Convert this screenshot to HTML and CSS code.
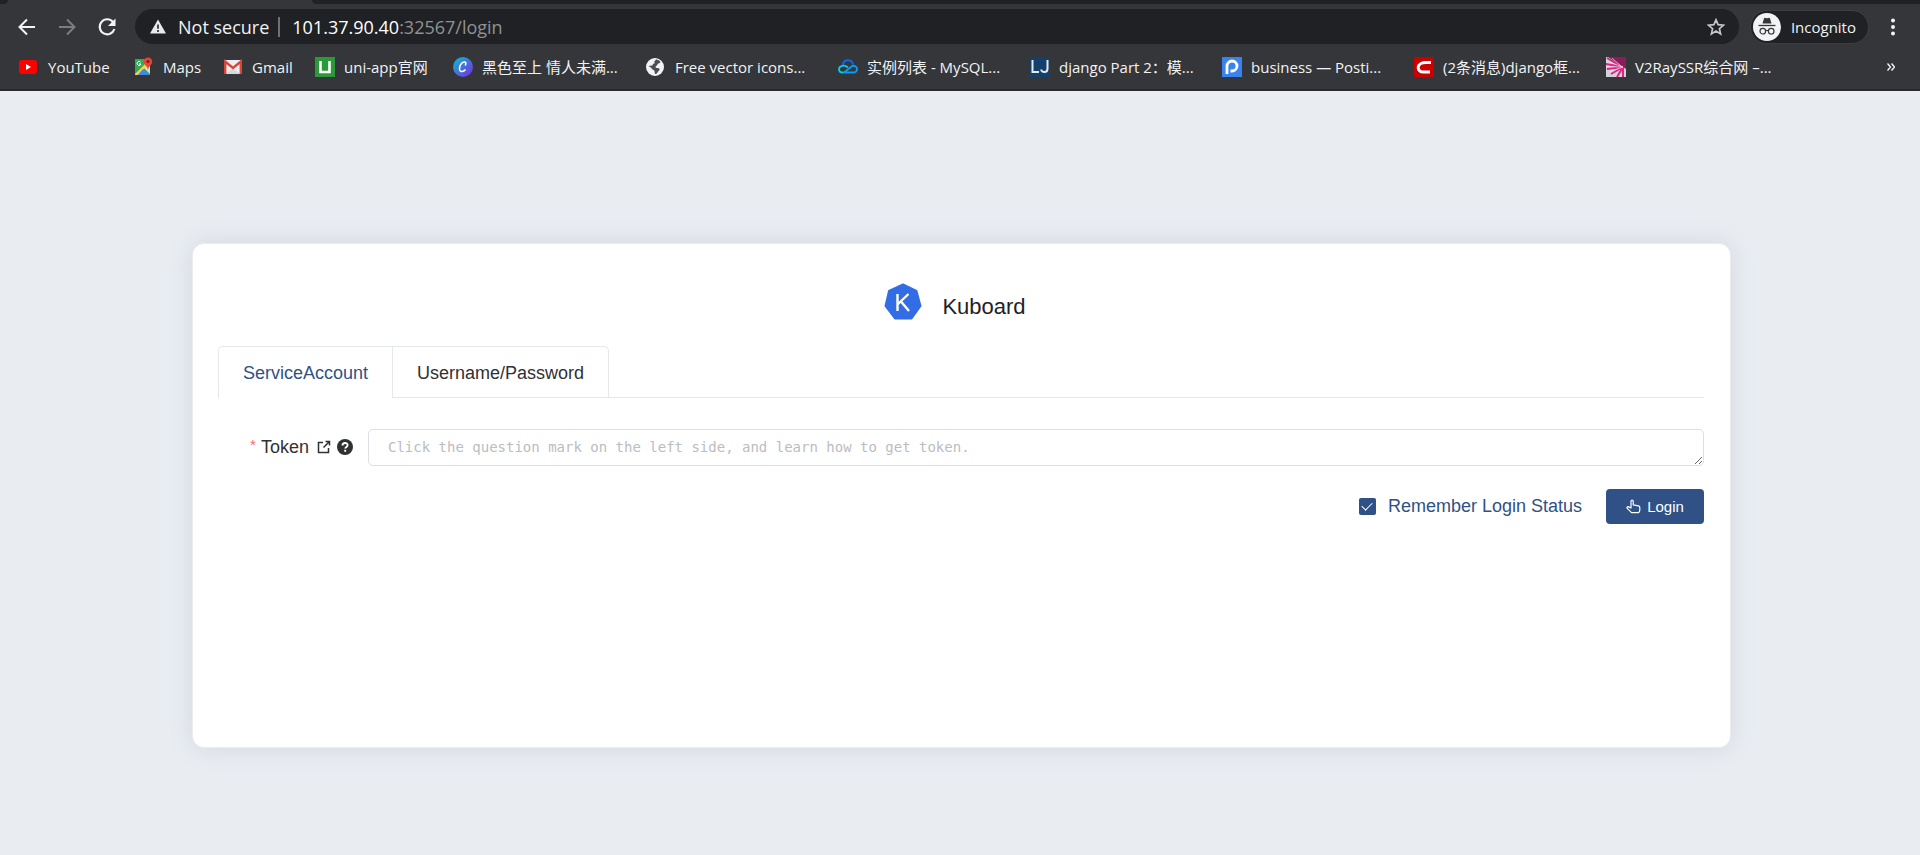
FILE: index.html
```
<!DOCTYPE html>
<html lang="en">
<head>
<meta charset="utf-8">
<title>Kuboard</title>
<link rel="stylesheet" href="styles.css">
</head>
<body>
<div class="browser">
  <div class="tabstrip"><div class="tabstrip-start"></div><div class="tabstrip-active"></div><div class="tabstrip-rest"></div></div>
  <div class="toolbar">
    <button class="nav-btn" aria-label="Back"><svg viewBox="0 0 20 20" width="20" height="20"><path d="M18 10H3M10 2.5L2.5 10l7.500 7.500" fill="none" stroke="#f1f3f4" stroke-width="2"/></svg></button>
    <button class="nav-btn" aria-label="Forward"><svg viewBox="0 0 20 20" width="20" height="20"><path d="M2 10h15M10 2.500L17.500 10 10 17.500" fill="none" stroke="#7b7d80" stroke-width="2"/></svg></button>
    <button class="nav-btn" aria-label="Reload"><svg viewBox="0 0 20 20" width="20" height="20"><path d="M16 5A7.500 7.500 0 1 0 17.400 12" fill="none" stroke="#f1f3f4" stroke-width="2.100"/><path d="M18.500 1.500v7.500h-7.500z" fill="#f1f3f4"/></svg></button>
    <div class="address">
      <svg class="warn" viewBox="0 0 16 15" width="16" height="15"><path d="M8 0.500L16 14.500H0z" fill="#e8eaed"/><path d="M8 5.500v4.200M8 11v2" stroke="#202124" stroke-width="1.600"/></svg>
      <span class="secure">Not secure</span>
      <span class="divider"></span>
      <span class="url">101.37.90.40<span class="url-path">:32567/login</span></span>
      <button class="star" aria-label="Bookmark this page"><svg viewBox="0 0 18 18" width="18" height="18"><path d="M9 1.800l2.100 4.900 5.300.5-4 3.500 1.200 5.200L9 13.100l-4.600 2.800 1.200-5.200-4-3.500 5.300-.5z" fill="none" stroke="#c4c6c9" stroke-width="1.700"/></svg></button>
    </div>
    <button class="incognito">
      <svg viewBox="0 0 28 28" width="28" height="28"><circle cx="14" cy="14" r="14" fill="#f1f3f4"/><path d="M9.500 10.500L11 5.500q.4-1 1.500-.6l1.500.4 1.500-.4q1.100-.4 1.500.6l1.500 5z" fill="#35363a"/><path d="M5.500 12.500h17" stroke="#35363a" stroke-width="1.300"/><circle cx="9.800" cy="18.200" r="2.800" fill="none" stroke="#35363a" stroke-width="1.200"/><circle cx="18.200" cy="18.200" r="2.800" fill="none" stroke="#35363a" stroke-width="1.200"/><path d="M12.600 17.700q1.400-.7 2.800 0" fill="none" stroke="#35363a" stroke-width="1.200"/></svg>
      <span>Incognito</span>
    </button>
    <button class="menu-btn" aria-label="Menu"><svg viewBox="0 0 4 18" width="4" height="18"><circle cx="2" cy="2.500" r="2" fill="#f1f3f4"/><circle cx="2" cy="9" r="2" fill="#f1f3f4"/><circle cx="2" cy="15.500" r="2" fill="#f1f3f4"/></svg></button>
  </div>
  <nav class="bookmarks" aria-label="Bookmarks">
    <a href="#" class="bookmark"><svg viewBox="0 0 20 20" width="20" height="20"><rect x="0" y="3" width="18" height="14" rx="3" fill="#f00"/><path d="M7 7l5 3-5 3z" fill="#fff"/></svg><span>YouTube</span></a>
    <a href="#" class="bookmark"><svg viewBox="0 0 20 20" width="20" height="20"><rect x="1" y="2" width="15" height="16" fill="#34a853"/><path d="M16 4v13L9 10z" fill="#dadce0"/><path d="M1 17L13 5l3 1L4 18H1z" fill="#fbd13c"/><path d="M4 18l5-6 6 6z" fill="#4285f4"/><path d="M6.500 5a2 2 0 1 0 .5 2H5" fill="none" stroke="#fff"/><path d="M14 0.500a4.200 4.200 0 0 1 4.200 4.200c0 3-3.600 4-4.200 8.300-.6-4.300-4.200-5.300-4.200-8.300A4.200 4.200 0 0 1 14 .5z" fill="#ea4335"/><circle cx="14" cy="4.500" r="1.500" fill="#7b1c14"/></svg><span>Maps</span></a>
    <a href="#" class="bookmark"><svg viewBox="0 0 20 20" width="20" height="20"><rect x="1" y="3" width="18" height="14" rx="1" fill="#eceff1"/><path d="M3 17l7-6 7 6z" fill="#d6d9dc"/><path d="M2.200 17V4.500L10 11l7.800-6.500V17" fill="none" stroke="#dc4437" stroke-width="2.400"/></svg><span>Gmail</span></a>
    <a href="#" class="bookmark"><svg viewBox="0 0 20 20" width="20" height="20"><rect width="20" height="20" fill="#2b9939"/><path d="M5.500 4v11h9V4" fill="none" stroke="#fff" stroke-width="2.600"/></svg><span>uni-app官网</span></a>
    <a href="#" class="bookmark"><svg viewBox="0 0 20 20" width="20" height="20"><defs><linearGradient id="canva" x1="0" y1="0" x2="1" y2="1"><stop offset="0.100" stop-color="#13b2cf"/><stop offset="0.900" stop-color="#7534e4"/></linearGradient></defs><circle cx="10" cy="10" r="10" fill="url(#canva)"/><path d="M12 8.500c1.500-1.500 1-4-1-3.500C8 5.500 6 9.500 6.500 12.500c.5 3 4 2.500 6 0" fill="none" stroke="#fff" stroke-width="1.500"/></svg><span>黑色至上 情人未满...</span></a>
    <a href="#" class="bookmark"><svg viewBox="0 0 20 20" width="20" height="20"><circle cx="9" cy="10" r="9" fill="#f1f3f4"/><path d="M10 2.500c2 0 3.500 1 4.500 2.500-1 2-3 1-3 2.500s-2 1-2 2.500 3.500.5 4 2-1.500 2-2 3.500-1.500 1.500-2.500 1.500l-.5-3c-1-1.500-3-1.500-3-3L2.500 9l3.500-.500c1 0 .5-2 2-2s1-1 0-1.500z" fill="#4b4d51"/></svg><span>Free vector icons...</span></a>
    <a href="#" class="bookmark"><svg viewBox="0 0 20 20" width="20" height="20"><path d="M5 9C4.500 1.500 14 1.500 15 7.500" fill="none" stroke="#0969ef" stroke-width="2"/><path d="M6 15.500l7-5.500c3-2.500 6-.5 6 2s-2 3.500-4 3.500H5" fill="none" stroke="#079bf5" stroke-width="1.900"/><path d="M10 10.500C6 7 1 9 1 12.200c0 2.300 2 3.300 4 3.300" fill="none" stroke="#0dc9de" stroke-width="1.900"/></svg><span>实例列表 - MySQL...</span></a>
    <a href="#" class="bookmark"><svg viewBox="0 0 20 20" width="20" height="20"><rect width="20" height="20" fill="#14416b"/><path d="M2.500 3v12H9M17.500 3v8.500q0 3.500-3 3.500t-3.300-2.500" fill="none" stroke="#e6e9ed" stroke-width="2"/></svg><span>django Part 2：模...</span></a>
    <a href="#" class="bookmark"><svg viewBox="0 0 20 20" width="20" height="20"><rect width="20" height="20" fill="#3a82f1"/><path d="M5 17V9a5 5 0 1 1 5 5H8.500" fill="none" stroke="#fff" stroke-width="2.800"/></svg><span>business — Posti...</span></a>
    <a href="#" class="bookmark"><svg viewBox="0 0 20 20" width="20" height="20"><rect width="20" height="20" fill="#c00"/><path d="M17 5.500h-5c-4 0-7.500 1.700-7.800 4.700-.3 3.200 2.300 4.800 5.300 4.800H16" fill="none" stroke="#fff" stroke-width="3"/></svg><span>(2条消息)django框...</span></a>
    <a href="#" class="bookmark"><svg viewBox="0 0 20 20" width="20" height="20"><rect width="20" height="20" fill="#d3d1d5"/><path d="M2 0h18v12z" fill="#8a1d5b"/><path d="M16 10L1 1M17 10L0 7M17 10L1 12M17 10L5 17M17 10l-6 10M17 10V20" stroke="#da2588" stroke-width="2"/><path d="M16 10L6 1M17 10L0 4M17 10L0 9.500M17 10L3 15" stroke="#f1dce8" stroke-width="0.700"/></svg><span>V2RaySSR综合网 –...</span></a>
    <button class="more" aria-label="More bookmarks"><svg viewBox="0 0 8 8" width="8" height="8"><path d="M0.500 0.500L3.500 4l-3 3.500M4.500 .5L7.500 4l-3 3.500" fill="none" stroke="#f1f3f4" stroke-width="1.400"/></svg></button>
  </nav>
</div>
<main class="page">
  <form class="card">
    <header class="brand">
      <svg viewBox="0 0 38 38" width="38" height="38"><path d="M19 1.500L32.500 8 36.500 23 27.500 35.500H11L1.500 23 5 8z" fill="#326de6" stroke="#326de6" stroke-width="2" stroke-linejoin="round"/><path d="M13.500 11v17M24.500 11l-10.500 10M17 18.500L25 28" fill="none" stroke="#fff" stroke-width="2.400"/></svg>
      <h1>Kuboard</h1>
    </header>
    <div class="tabs" role="tablist">
      <div class="tab-group">
        <button type="button" class="tab active" role="tab" aria-selected="true">ServiceAccount</button>
        <button type="button" class="tab" role="tab" aria-selected="false">Username/Password</button>
      </div>
    </div>
    <div class="field">
      <div class="field-label">
        <span class="required">*</span>
        <label for="token">Token</label>
        <a href="#" class="link-icon" aria-label="Open guide"><svg viewBox="0 0 14 14" width="14" height="14"><path d="M6 2.500H1.500v10h10V8M8.500 1.500h4v4M12.500 1.500L6.500 7.500" fill="none" stroke="#303133" stroke-width="1.500"/></svg></a>
        <a href="#" class="link-icon" aria-label="Help"><svg viewBox="0 0 16 16" width="16" height="16"><circle cx="8" cy="8" r="8" fill="#303133"/><path d="M5.500 6.500C5.500 3.300 10.600 3.300 10.600 6.200 10.600 7.800 8.200 8 8.200 9.600M8.200 10.800v2" fill="none" stroke="#fff" stroke-width="1.900"/></svg></a>
      </div>
      <textarea id="token" class="token" rows="1" placeholder="Click the question mark on the left side, and learn how to get token."></textarea>
    </div>
    <div class="actions">
      <label class="remember"><input type="checkbox" class="check" checked><span>Remember Login Status</span></label>
      <button type="button" class="login"><svg viewBox="0 0 15 15" width="15" height="15"><path d="M5 9.500V2.200q0-1.200 1.100-1.200t1.100 1.200v3.600l5.300 1.100q1.300.3 1.300 1.600v2.500q0 1.500-1.300 2.700H5.500L1 9.200q-.3-1.500 1.200-1.600L5 9" fill="none" stroke="#fff" stroke-width="1.200" stroke-linejoin="round"/></svg><span>Login</span></button>
    </div>
  </form>
</main>
</body>
</html>
```
FILE: styles.css
```
* { box-sizing: border-box; }

body {
  margin: 0;
  min-height: 100vh;
  display: flex;
  flex-direction: column;
  background: #e9edf2;
  font-family: "Liberation Sans", Arial, sans-serif;
  color: #303133;
}

button {
  margin: 0;
  padding: 0;
  border: 0;
  background: none;
  font: inherit;
  color: inherit;
}

a { color: inherit; text-decoration: none; }
svg { display: block; flex: none; }

/* Browser chrome */
.browser {
  background: #35363a;
  border-bottom: 2px solid #29292b;
  color: #f1f3f4;
  font-family: "Open Sans", "Noto Sans CJK SC", sans-serif;
}

.tabstrip { display: flex; height: 4px; background: #35363a; }
.tabstrip-start { width: 8px; background: #202124; border-bottom-right-radius: 4px; }
.tabstrip-active { width: 304px; }
.tabstrip-rest { flex: 1; background: #202124; border-bottom-left-radius: 4px; }

.toolbar {
  display: flex;
  align-items: center;
  padding: 5px 25px 0 17px;
}

.nav-btn { width: 20px; margin-right: 20px; }

.address {
  flex: 1;
  display: flex;
  align-items: center;
  height: 35px;
  margin-left: -2px;
  padding: 0 14px 0 15px;
  border-radius: 18px;
  background: #202124;
  font-size: 18px;
  line-height: 24px;
  white-space: nowrap;
}

.secure { margin-left: 12px; }
.divider { width: 2px; height: 20px; margin: 0 12px 0 9px; background: #6f7174; }
.url { flex: 1; color: #fff; }
.url-path { color: #8f9194; }

.incognito {
  display: flex;
  align-items: center;
  gap: 10px;
  height: 34px;
  margin-left: 11px;
  padding: 0 12px 0 2px;
  border: 1px solid #3d3e42;
  border-radius: 17px;
  background: #202124;
  font-size: 15px;
}

.menu-btn { margin-left: 22px; }

.bookmarks {
  display: grid;
  grid-template-columns: 115px 89px 92px 138px 193px repeat(6, minmax(0, 192px)) 1fr;
  align-items: center;
  height: 45px;
  padding: 1px 25px 0 19px;
  font-size: 15px;
  line-height: 20px;
}

.bookmark {
  display: flex;
  align-items: center;
  gap: 9px;
  white-space: nowrap;
}

.more { justify-self: end; }

/* Login page */
.page { flex: 1; padding-top: 152px; }

.card {
  width: calc(80% + 3px);
  min-height: 505px;
  margin: 0 auto 0 10%;
  padding: 39px 26px 25px 25px;
  border: 1px solid #eaecef;
  border-radius: 12px;
  background: #fff;
  box-shadow: 0 0 25px #d3d7de;
}

.brand {
  display: flex;
  justify-content: center;
  gap: 20px;
  padding-right: 12px;
}

.brand h1 {
  margin: 10px 0 0;
  font-size: 22px;
  line-height: 28px;
  font-weight: 400;
  color: #1f2226;
}

.tabs {
  margin-top: 25px;
  border-bottom: 1px solid #e4e7ed;
}

.tab-group {
  display: inline-flex;
  vertical-align: top;
  margin-bottom: -1px;
  border: 1px solid #e4e7ed;
  border-bottom: 0;
  border-radius: 5px 5px 0 0;
}

.tab {
  height: 51px;
  padding: 2px 24px 0;
  border-bottom: 1px solid #e4e7ed;
  font-size: 18px;
}

.tab + .tab { border-left: 1px solid #e4e7ed; }
.tab.active { color: #2f5186; border-bottom-color: #fff; }

.field { display: flex; margin-top: 31px; }

.field-label {
  display: flex;
  align-items: center;
  justify-content: flex-end;
  width: 150px;
  height: 36px;
  padding-right: 15px;
  font-size: 18px;
}

.required {
  margin-right: 5px;
  padding-bottom: 6px;
  font-size: 15px;
  color: #f56c6c;
}

.link-icon { margin-left: 8px; }
.link-icon + .link-icon { margin-left: 6px; }

.token {
  flex: 1;
  height: 37px;
  padding: 7px 19px;
  border: 1px solid #dcdfe6;
  border-radius: 5px;
  font-family: "DejaVu Sans Mono", monospace;
  font-size: 14px;
  line-height: 21px;
  resize: vertical;
  overflow: hidden;
  outline: 0;
}

.token::placeholder { color: #bbbdc0; }

.actions {
  display: flex;
  justify-content: flex-end;
  align-items: center;
  gap: 24px;
  margin-top: 23px;
}

.remember {
  display: flex;
  align-items: center;
  gap: 12px;
  font-size: 18px;
  color: #2f5186;
}

.check {
  appearance: none;
  display: grid;
  place-items: center;
  width: 17px;
  height: 17px;
  margin: 0;
  border-radius: 2px;
  background: #2f5186;
}

.check:checked::after {
  content: "";
  width: 5px;
  height: 9px;
  margin-bottom: 3px;
  border: solid #fff;
  border-width: 0 1px 1px 0;
  transform: rotate(45deg);
}

.login {
  display: flex;
  align-items: center;
  justify-content: center;
  gap: 6px;
  width: 98px;
  height: 35px;
  border-radius: 4px;
  background: #2f5186;
  color: #fff;
  font-size: 15px;
}
```
